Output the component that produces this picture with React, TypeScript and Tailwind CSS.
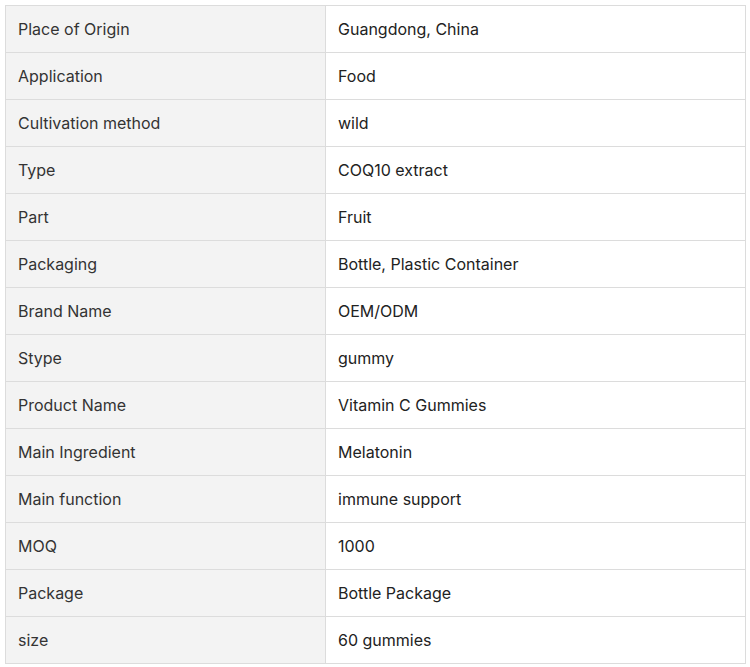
import React from 'react';

const rows: [string, string][] = [
  ['Place of Origin', 'Guangdong, China'],
  ['Application', 'Food'],
  ['Cultivation method', 'wild'],
  ['Type', 'COQ10 extract'],
  ['Part', 'Fruit'],
  ['Packaging', 'Bottle, Plastic Container'],
  ['Brand Name', 'OEM/ODM'],
  ['Stype', 'gummy'],
  ['Product Name', 'Vitamin C Gummies'],
  ['Main Ingredient', 'Melatonin'],
  ['Main function', 'immune support'],
  ['MOQ', '1000'],
  ['Package', 'Bottle Package'],
  ['size', '60 gummies'],
];

export default function App() {
  return (
    <div className="w-[750px] h-[667px] bg-white p-[5px] font-['Inter',sans-serif] text-[16px]">
      <div className="w-[741px] border-l border-t border-[#dcdcdc] grid grid-cols-[320px_420px]">
        {rows.map(([k, v]) => (
          <React.Fragment key={k}>
            <div className="h-[47px] flex items-center px-3 bg-[#f3f3f3] border-r border-b border-[#dcdcdc] text-[#333333]">
              {k}
            </div>
            <div className="h-[47px] flex items-center px-3 bg-white border-r border-b border-[#dcdcdc] text-[#222222]">
              {v}
            </div>
          </React.Fragment>
        ))}
      </div>
    </div>
  );
}
